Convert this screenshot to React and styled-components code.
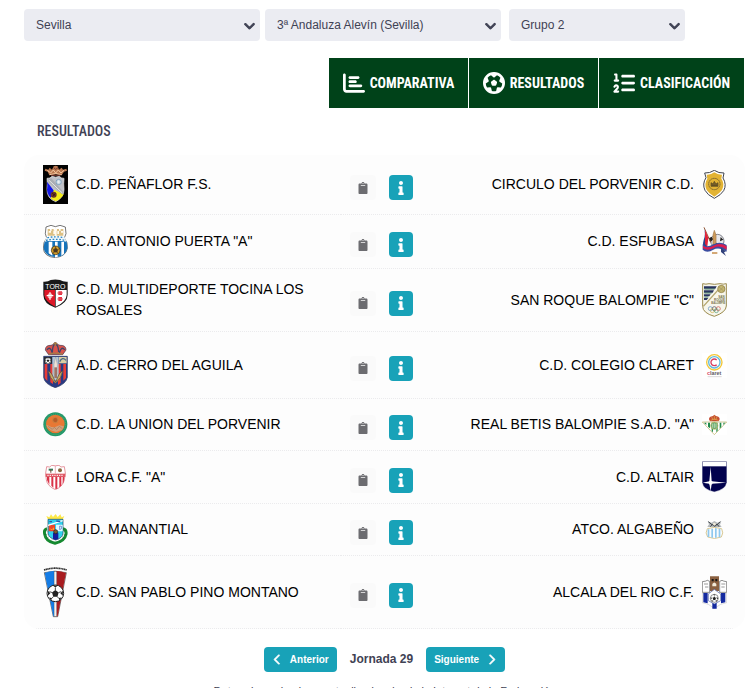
import React, { useState } from 'react'
import styled, { createGlobalStyle } from 'styled-components'
import { FaChartBar, FaFutbol, FaListOl, FaChevronLeft, FaChevronRight, FaChevronDown } from 'react-icons/fa6'
import { FaClipboard, FaInfo } from 'react-icons/fa'

const GlobalStyle = createGlobalStyle`
  * {
    box-sizing: border-box;
  }
  body {
    margin: 0;
    background: #fff;
    color: #3f4254;
    font-family: "Liberation Sans", Arial, sans-serif;
    font-size: 12px;
  }
`

const Page = styled.main`
  padding: 9px 5px 0 24px;
`

const Filters = styled.form`
  display: flex;
  gap: 8px;
  padding-right: 60px;
`

const FilterGroup = styled.div`
  display: flex;
  flex: ${(props) => props.$grow} 1 0;
  gap: 5px;
`

const SelectBox = styled.label`
  position: relative;
  flex: 1 1 0;
  min-width: 0;

  svg {
    position: absolute;
    right: 5px;
    top: 11px;
    stroke: currentColor;
    stroke-width: 50;
    pointer-events: none;
  }
`

const Select = styled.select`
  appearance: none;
  display: block;
  width: 100%;
  height: 32px;
  padding: 0 24px 0 12px;
  border: 0;
  border-radius: 4px;
  background: #ebecf2;
  color: #3f4254;
  font: inherit;
`

const Tabs = styled.nav`
  display: flex;
  justify-content: flex-end;
  margin-top: 17px;
`

const Tab = styled.button`
  display: flex;
  align-items: center;
  justify-content: center;
  gap: 5px;
  width: ${(props) => props.$width};
  height: 50px;
  padding: 0;
  border: 0;
  border-right: 1px solid #fff;
  background: #004219;
  color: #fff;
  font: bold 14px "Roboto Condensed", "Liberation Sans Narrow", "Open Sans Condensed", "Liberation Sans", sans-serif;
  text-transform: uppercase;
  cursor: pointer;

  svg {
    flex: none;
  }
`

const Title = styled.h1`
  margin: 10px 0 0 13px;
  font: 500 14px/26px "Roboto Condensed", "Liberation Sans Narrow", "Open Sans Condensed", "Liberation Sans", sans-serif;
  text-transform: uppercase;
`

const Matches = styled.table`
  width: 100%;
  margin-top: 11px;
  table-layout: fixed;
  border-collapse: separate;
  border-spacing: 0;
  border-radius: 15px;
  background: #fdfdfd;
  overflow: hidden;
  color: #000;
  font-size: 14px;
  line-height: 21px;
`

const Cell = styled.td`
  width: ${(props) => props.$width || 'auto'};
  padding: ${(props) => props.$pad || '10px 18px 10px 19px'};
  border-bottom: 1px dotted #ebebed;
  vertical-align: middle;
`

const Team = styled.div`
  display: flex;
  align-items: ${(props) => (props.$top ? 'flex-start' : 'center')};
  flex-direction: ${(props) => (props.$away ? 'row-reverse' : 'row')};
  gap: 8px;

  svg {
    display: block;
    flex: none;
  }
`

const Actions = styled.div`
  display: flex;
  gap: 13px;
  padding-top: 6px;
`

const IconButton = styled.button`
  display: flex;
  align-items: center;
  justify-content: center;
  width: ${(props) => (props.$info ? '24px' : '26px')};
  height: 25px;
  padding: 0;
  border: 0;
  border-radius: 4px;
  background: ${(props) => (props.$info ? '#18a2b8' : '#fafafa')};
  color: ${(props) => (props.$info ? '#fff' : '#6c6c70')};
  cursor: pointer;
`

const Pager = styled.div`
  display: flex;
  align-items: center;
  justify-content: center;
  gap: 13px;
  margin-top: 18px;
`

const PageButton = styled.button`
  display: flex;
  align-items: center;
  gap: 7px;
  height: 25px;
  padding: 0 8px;
  border: 0;
  border-radius: 4px;
  background: #18a2b8;
  color: #fff;
  font: bold 10px "Liberation Sans", Arial, sans-serif;
  cursor: pointer;

  svg {
    stroke: currentColor;
    stroke-width: 30;
  }
`

const Round = styled.strong`
  font-size: 12px;
  line-height: 21px;
`

const Note = styled.p`
  margin: 12px 0 0;
  font-size: 11px;
  line-height: 14px;
  text-align: center;
`

// every crest is drawn on a grid of 75 units, three to a pixel
const Crest = ({ h, children }) => (
  <svg width="25" height={h} viewBox={`0 0 75 ${h * 3}`} aria-hidden="true">{children}</svg>
)

const Ball = ({ x, y, r, fill = '#fff' }) => (
  <g transform={`translate(${x} ${y}) scale(${r / 10})`}>
    <circle r="10" fill={fill} stroke="#222" strokeWidth="1.2" />
    <path d="M0-4 4-1 2.500 4h-5L-4-1zM-3-9.500h6L0-7zM9-3l0 6-3-3zM-9-3v6l3-3zM5 8.500 4 5.500 7.500 5zM-5 8.500-4 5.500-7.500 5z" fill="#222" />
    <path d="M0-4v-3M4-1l3-1M2.500 4 4 6M-2.500 4-4 6M-4-1l-3-1" stroke="#222" strokeWidth="1" />
  </g>
)

const Penaflor = () => (
  <Crest h={39}>
    <path fill="#020202" d="M0 0h75v117H0z" />
    <path d="M19 31 14 20 5 17l2-6 9 3 4-6 7 6 5-10 6-2 6 2 4 10 8-6 4 6 10-3 2 6-9 3-7 11-16-3z" fill="#b97850" />
    <path d="M20 29q18-7 36 0M13 16l10 8 8-9 7 9 8-9 8 9 9-8" stroke="#f4c8a0" strokeWidth="3" fill="none" />
    <path d="m32 8 6 5 7-5M24 31h29" stroke="#76372e" strokeWidth="3" fill="none" />
    <path d="M12 40q10 1 15-6 11 5 22 0 6 7 14 6-2 16 0 33 0 25-25 37-27-10-26-37 2-17 0-33" fill="#bfc1c8" stroke="#f0f0f0" strokeWidth="2" />
    <path d="M12 50q2 12 0 25 1 22 26 34V84z" fill="#1316e8" />
    <path d="m33 74 29 14q-7 14-24 21-9-3-15-9z" fill="#f4ed18" />
    <path d="m17 42 8-2 37 42-3 7-42-38z" fill="#a9adb3" />
    <path d="m18 46 40 38" stroke="#e7e7e9" strokeWidth="3" />
    <circle cx="47" cy="51" r="8" fill="#c8d5df" stroke="#6894b7" strokeWidth="2" />
    <path d="M42 51h10M47 46v9" stroke="#f8faff" strokeWidth="2" />
    <circle cx="32" cy="89" r="9" fill="#6d3525" />
    <path d="m27 84 10 8M37 85l-8 9" stroke="#1b1012" strokeWidth="2" />
  </Crest>
)

const Puerta = () => (
  <Crest h={33}>
    <path d="M9 6 24 1l13 4 14-4 16 5 2 20-5 13q11 13 9 31-4 24-36 28Q3 95 1 70q-1-18 10-31L7 26z" fill="#fff" stroke="#333" strokeWidth="2" />
    <path d="M14 12h7v5h5v-5h6v5h10v-5h6v5h5v-5h8v20H14z" fill="#dcc084" />
    <path d="M17 18h7v5h-7zm14 0h5v9h-5zm12 0h5v9h-5zm11 0h6v5h-6zM35 10h6v24h-6z" fill="#fffaf0" />
    <path d="M6 48h64q4 11 3 22-6 25-35 26Q6 94 2 70q0-12 4-22" fill="#1673ba" />
    <path d="M17 50h11v42l-11-7zm19 0h8v47h-8zm19 0h8v36l-8 6z" fill="#fff" />
    <path d="M10 37q28-7 55 0l5 13q-32-8-65 0z" fill="#eef6fb" />
    <path d="M13 38q26-5 50 0M9 46q28-6 57 0" stroke="#2684c0" strokeWidth="4" strokeDasharray="5 5" fill="none" />
    <circle cx="38" cy="76" r="13" fill="#d39e27" stroke="#332d20" strokeWidth="2" />
    <path d="m32 74 6-5 6 5-2 7h-9zm-6-5 6 5m12 0 7-5m-9 12 4 6m-13-6-5 6m10-18v-6" fill="#4a3820" stroke="#4a3820" strokeWidth="2" />
  </Crest>
)

const Toro = () => (
  <Crest h={29}>
    <path d="M1 8q14 1 22-5 14-3 28 0 10 6 23 5v39q0 25-37 39Q1 74 1 47z" fill="#181818" />
    <path d="M4 33h32v50Q6 68 4 49z" fill="#dc1828" />
    <path d="M38 33h33v15q-1 21-33 35z" fill="#fff" />
    <text x="37" y="29" textAnchor="middle" fill="#fff" fontSize="21" fontFamily="Liberation Sans">TORO</text>
    <path d="M21 40v22M11 50h20" stroke="#fff" strokeWidth="4" />
    <path d="M16 45h10v11H16z" fill="none" stroke="#fff" strokeWidth="2" />
    <path d="M46 37h11v11H46zm0 17h11v12H46z" fill="#e72f41" />
    <path d="M43 42h17M43 60h17" stroke="#df5863" strokeWidth="3" />
  </Crest>
)

const Aguila = () => (
  <Crest h={46}>
    <path d="M17 38 7 24q0-15 17-14l8-3 2-5h6l3 5 8 3q18-1 18 14L59 38z" fill="#d9534b" stroke="#40364e" strokeWidth="2" />
    <path d="M12 24q9-14 16 9M65 24q-9-14-16 9M28 30q1-23 9-23 9 0 10 23" fill="none" stroke="#3d456b" strokeWidth="4" />
    <path d="M37 0v13M31 5h12M18 36q19-5 40 0" stroke="#a57c45" strokeWidth="4" fill="none" />
    <path d="M2 43h71v63q-3 20-36 31Q4 126 2 106z" fill="#293a84" stroke="#27335d" strokeWidth="2" />
    <path d="M5 66h8v51l-8-9zm17 0h8v60l-8-5zm23 0h8v57l-8 6zm16 0h8v42l-8 8z" fill="#e93c35" />
    <path d="M3 45h24v20H3z" fill="#292d34" />
    <Ball x={15} y={56} r={9} />
    <path d="M48 45h23v19H48z" fill="#d8cda2" />
    <path d="M50 59q8-16 19-4" stroke="#466986" strokeWidth="4" fill="none" />
    <path d="M28 45h19v63q-10 16-19 0z" fill="#b4c6d4" />
    <path d="m38 45 5 22v29q-5 8-10 0V67z" fill="#eee3d9" stroke="#80868b" />
    <path d="M16 86q10 4 20 32h3q10-28 20-32-2 22-22 38-18-16-21-38" fill="#c8a661" stroke="#53493a" strokeWidth="2" />
    <path d="M34 76h8v32h-8z" fill="#9c7568" />
  </Crest>
)

const Union = () => (
  <Crest h={25}>
    <circle cx="37" cy="37" r="36" fill="#219769" />
    <circle cx="37" cy="37" r="31" fill="none" stroke="#4da676" strokeWidth="3" strokeDasharray="3 3" />
    <circle cx="37" cy="36" r="28" fill="#e87834" />
    <circle cx="37" cy="24" r="8" fill="#b65c29" stroke="#c9823f" strokeWidth="3" />
    <path d="m10 38 15 7 10 1 14-6 14 3-6 11-18 6-16-5-10-9z" fill="#d3a07a" />
    <path d="m15 43 13 9 6-6 7 7 8-10 9 7" stroke="#9c7c62" strokeWidth="2" fill="none" />
  </Crest>
)

const Lora = () => (
  <Crest h={25}>
    <path d="M11 5 20 6l6-5q11 3 22 0l6 5 10-1 3 19-3 21q-5 20-27 29Q13 63 10 45L8 24z" fill="#fff" stroke="#d96371" strokeWidth="2" />
    <path d="M12 36h7v23l-7-14zm13 0h6v32l-6-6zm12 0h6v35l-6 1zm12 0h6v26l-6 5zm10 0h5l-2 15-3 6z" fill="#da3247" />
    <path d="M8 26h59v10H8z" fill="#df5865" />
    <path d="M13 31h49" stroke="#fff" strokeWidth="3" strokeDasharray="4 3" />
    <path d="M17 11h13v6H17z" fill="#397454" />
    <path d="M22 15h3v8h-3z" fill="#62462e" />
    <circle cx="51" cy="16" r="6" fill="#8a683e" />
    <path d="M37 3v23" stroke="#d9929a" strokeWidth="2" />
  </Crest>
)

const Manantial = () => (
  <Crest h={31}>
    <path d="m14 15-4-9 9 4 5-9 6 8 8-9 6 9 8-8 4 9 8-4-4 9z" fill="#fce84a" />
    <path d="M12 44Q2 46 5 60q3 22 31 28 29-6 33-27 2-15-9-17" fill="none" stroke="#168a30" strokeWidth="9" />
    <path d="m5 48 9 5M3 61l10 1M9 74l9-6M23 86l4-9M70 48l-9 5M72 61l-10 1M66 74l-9-6M51 86l-4-9" stroke="#07542d" strokeWidth="1" />
    <path d="M15 16h45v42q-1 14-22 20-21-6-23-20z" fill="#2fd2ee" stroke="#203d57" strokeWidth="2" />
    <path d="M17 32h19v20H17z" fill="#ec4629" />
    <path d="M39 32h20v20H39z" fill="#dffaff" />
    <path d="M30 56h16v19l-8 3-8-3z" fill="#151c9c" />
    <path d="m18 43 9 6 4-9 4 9" fill="#ffb52b" />
    <path d="m15 34 44-14" stroke="#fff" strokeWidth="4" />
    <path d="M19 23h8M40 21l12 2" stroke="#3456a8" strokeWidth="4" />
    <path d="M50 36v11q8-1 6-10z" fill="none" stroke="#4b65c0" strokeWidth="2" />
    <circle cx="38" cy="53" r="6" fill="#795a31" stroke="#191e27" strokeWidth="2" />
  </Crest>
)

const SanPablo = () => (
  <Crest h={52}>
    <path d="M3 12Q37 1 72 12" fill="none" stroke="#333" strokeWidth="5" strokeDasharray="4 1" />
    <path d="M4 20q31-9 66 0L44 152H31z" fill="#fff" stroke="#333" strokeWidth="2" />
    <path d="M5 21q14-6 28-6v136h-2z" fill="#147ce5" />
    <path d="M41 15q14 0 28 6L44 151h-3z" fill="#a81c20" />
    <path d="M34 15v136M40 15v136" stroke="#222" />
    <Ball x={37} y={82} r={25} />
  </Crest>
)

const Circulo = () => (
  <Crest h={29}>
    <path d="M8 9Q23 10 37 1q13 9 29 8l-3 15q12 20 2 38-8 13-28 23Q16 75 9 61 0 42 12 23z" fill="#fff" stroke="#40444e" strokeWidth="3" />
    <path d="M14 14q12 1 23-7 11 8 23 7l-2 12q11 14 2 34-7 10-23 20Q20 70 14 60 5 42 16 26z" fill="#e2b334" />
    <circle cx="37" cy="42" r="17" fill="none" stroke="#7d6630" strokeWidth="3" strokeDasharray="5 1" />
    <path d="M27 49v-11l6 4 4-8 5 8 6-4v11zM30 46h15" fill="#79602a" stroke="#55451f" strokeWidth="2" />
  </Crest>
)

const Esfubasa = () => (
  <Crest h={30}>
    <circle cx="46" cy="42" r="20" fill="#e8e8eb" stroke="#4c4f5c" strokeWidth="2" />
    <path d="m20 34 9-5 5 8-9 9zM56 30l8 8-10 5zM40 46l8 4-5 6z" fill="#222" />
    <path d="M33 56V24l4-14 5 14v32z" fill="#cd9c5a" stroke="#a67a48" strokeWidth="2" />
    <path d="M6 1 26 46" stroke="#965835" strokeWidth="3" />
    <path d="M6 3q6 20-1 36-3 10-2 20l12 7-1-38z" fill="#28458a" />
    <path d="m9 8 10 24-3 27-7-8z" fill="#df233b" />
    <path d="M2 52q12 12 32 0 19-10 40 2v20Q50 58 34 68 15 80 2 68z" fill="#3b4da0" />
    <path d="M3 56q14 9 31 0 21-11 40 2v10Q52 52 35 63 17 73 3 64z" fill="#d91d50" />
    <path d="m57 62 15 11-6 3 6 11-15-12z" fill="#32427b" />
    <path d="M30 75h16v6H30z" fill="#d4a977" />
  </Crest>
)

const SanRoque = () => (
  <Crest h={34}>
    <path d="M2 2q10 3 19 0 17 4 33 0 10 3 19 0v67q-1 19-36 31Q2 90 2 70z" fill="#f7f6ec" stroke="#9a8a4d" strokeWidth="3" />
    <path d="M6 10h38l-4 7H6zm0 12h30l-4 7H6zm0 12h20l-4 6H6zm0 11h13l-5 6H6z" fill="#29345f" />
    <path d="M7 18h31M7 30h22M7 42h12" stroke="#3e7460" strokeWidth="3" />
    <path d="M4 70 60 8" stroke="#b3a56c" strokeWidth="4" />
    <circle cx="58" cy="18" r="11" fill="#c4b773" stroke="#8a773d" strokeWidth="2" />
    <path d="m51 12 14 12m0-13L51 25" stroke="#a0915a" strokeWidth="2" />
    <text x="68" y="46" textAnchor="end" fontSize="9" fontWeight="bold" fill="#767148" fontFamily="Liberation Sans">SAN</text>
    <text x="69" y="55" textAnchor="end" fontSize="9" fontWeight="bold" fill="#767148" fontFamily="Liberation Sans">ROQUE</text>
    <text x="70" y="64" textAnchor="end" fontSize="8" fontWeight="bold" fill="#767148" fontFamily="Liberation Sans">BALOMPIE</text>
    <g fill="none" strokeWidth="2">
      <circle cx="25" cy="77" r="6" stroke="#5589bb" />
      <circle cx="37" cy="77" r="6" stroke="#44464f" />
      <circle cx="49" cy="77" r="6" stroke="#cb5148" />
      <circle cx="31" cy="83" r="6" stroke="#cdae4a" />
      <circle cx="43" cy="83" r="6" stroke="#4b9878" />
    </g>
  </Crest>
)

const Claret = () => (
  <Crest h={25}>
    <path fill="#fff" d="M0 0h75v75H0z" />
    <circle cx="37" cy="28" r="23" fill="none" stroke="#f4c735" strokeWidth="4" />
    <circle cx="37" cy="28" r="17" fill="none" stroke="#61b9dc" strokeWidth="4" />
    <path d="M44 21a10 10 0 1 0 0 14" stroke="#d73d5e" strokeWidth="4" fill="none" />
    <text x="15" y="66" fontSize="16" fontWeight="bold" fill="#5d5962" fontFamily="Liberation Sans"><tspan fill="#d84361">c</tspan>laret</text>
    <path d="M17 71h42" stroke="#c7c5c6" strokeWidth="2" />
  </Crest>
)

const Betis = () => (
  <Crest h={21}>
    <path fill="#fff" d="M0 0h75v63H0z" />
    <path d="M25 22q-8-8 0-14l8-2 4-4 5 4 7 2q8 6 0 14z" fill="#c54c32" />
    <path d="M26 19q11-8 23 0M29 9l4 9m4-13v13m8-10-4 10" stroke="#e3b04b" strokeWidth="2" fill="none" />
    <path d="M1 24h73L37 62z" fill="#fff" stroke="#b9ad61" strokeWidth="2" />
    <path d="M7 26h6v7l-6-5zm11 0h6v17l-6-5zm11 0h4v29l-4-4zm14 0h4v24l-4 5zm10 0h5v13l-5 5zm11 0h6l-6 7z" fill="#238b4b" />
    <circle cx="37" cy="35" r="11" fill="#60a773" stroke="#d2bd68" strokeWidth="2" />
    <path d="M32 29v12M37 28v14M42 29v12" stroke="#e5efc7" strokeWidth="2" />
  </Crest>
)

const Altair = () => (
  <Crest h={32}>
    <path d="M1 2h73v62q-4 23-37 28Q4 87 1 64z" fill="#02024e" stroke="#5c5e90" strokeWidth="1" />
    <path d="M2 3h71v13H2z" fill="#fff" />
    <path d="m26 17 3 44 44 4-44 3-3 23-4-23-20-3 20-4z" fill="#fff" />
    <circle cx="26" cy="65" r="6" fill="#fff" />
  </Crest>
)

const Algabeno = () => (
  <Crest h={21}>
    <path d="m17 7 12 4 8-5 9 5 12-4-4 10 5 7H16l5-8z" fill="#b4b8ba" />
    <path d="m19 8 12 10M55 8 44 18M25 23l7-8 6 8 7-8 6 8" stroke="#41464b" strokeWidth="3" fill="none" />
    <circle cx="37" cy="15" r="4" fill="#f2ecd9" />
    <path d="M16 29q21-8 43 0 7 13-1 25-20 9-41 0-9-12-1-25" fill="#f8fbfd" stroke="#dac996" strokeWidth="3" />
    <path d="M17 31h5v23h-5zm11-2h5v27h-5zm11-1h5v28h-5zm11 1h5v26h-5z" fill="#8fc8ee" />
  </Crest>
)

const Alcala = () => (
  <Crest h={33}>
    <path d="M24 1h27v44H24z" fill="#8a6040" />
    <path d="M29 9h6v7h-6zm11 0h6v7h-6z" fill="#171615" />
    <path d="M31 24q6-9 12 0v7H31z" fill="#f1e9d8" />
    <path d="M1 17q11-1 15-4l7 3v33H1zm52-1 7-3q4 3 14 4v32H53z" fill="#fff" stroke="#555" strokeWidth="2" />
    <path d="M6 24h12M9 33h10M58 24h12M58 33h10" stroke="#9a9a9a" strokeWidth="3" />
    <path d="M1 51h73v29l-18 5-19 12-18-12-18-5z" fill="#fff" stroke="#999" />
    <path d="M4 51h13v31L4 79zm53 0h13v28l-13 3zM31 76h13v22H31z" fill="#142aa0" />
    <path d="m19 54 18-14 19 14v20L37 84 19 74z" fill="#fff" stroke="#475ba5" strokeWidth="2" />
    <Ball x={37} y={67} r={12} />
  </Crest>
)

const matches = [
  { home: 'C.D. PEÑAFLOR F.S.', HomeCrest: Penaflor, away: 'CIRCULO DEL PORVENIR C.D.', AwayCrest: Circulo },
  { home: 'C.D. ANTONIO PUERTA "A"', HomeCrest: Puerta, away: 'C.D. ESFUBASA', AwayCrest: Esfubasa },
  { home: 'C.D. MULTIDEPORTE TOCINA LOS ROSALES', HomeCrest: Toro, away: 'SAN ROQUE BALOMPIE "C"', AwayCrest: SanRoque, top: true },
  { home: 'A.D. CERRO DEL AGUILA', HomeCrest: Aguila, away: 'C.D. COLEGIO CLARET', AwayCrest: Claret },
  { home: 'C.D. LA UNION DEL PORVENIR', HomeCrest: Union, away: 'REAL BETIS BALOMPIE S.A.D. "A"', AwayCrest: Betis },
  { home: 'LORA C.F. "A"', HomeCrest: Lora, away: 'C.D. ALTAIR', AwayCrest: Altair },
  { home: 'U.D. MANANTIAL', HomeCrest: Manantial, away: 'ATCO. ALGABEÑO', AwayCrest: Algabeno },
  { home: 'C.D. SAN PABLO PINO MONTANO', HomeCrest: SanPablo, away: 'ALCALA DEL RIO C.F.', AwayCrest: Alcala },
]

const Filter = ({ label, options }) => {
  const [value, setValue] = useState(options[0])
  return (
    <SelectBox>
      <Select aria-label={label} value={value} onChange={(e) => setValue(e.target.value)}>
        {options.map((option) => <option key={option}>{option}</option>)}
      </Select>
      <FaChevronDown size={11} />
    </SelectBox>
  )
}

const App = () => {
  return (
    <Page>
      <GlobalStyle />
      <Filters>
        <FilterGroup $grow={477}>
          <Filter label="Provincia" options={['Sevilla']} />
          <Filter label="Competición" options={['3ª Andaluza Alevín (Sevilla)']} />
        </FilterGroup>
        <FilterGroup $grow={176}>
          <Filter label="Grupo" options={['Grupo 2']} />
        </FilterGroup>
      </Filters>
      <Tabs>
        <Tab type="button" $width="140px"><FaChartBar size={22} />Comparativa</Tab>
        <Tab type="button" $width="130px"><FaFutbol size={22} />Resultados</Tab>
        <Tab type="button" $width="146px"><FaListOl size={22} />Clasificación</Tab>
      </Tabs>
      <Title>Resultados</Title>
      <Matches>
        <tbody>
          {matches.map(({ home, HomeCrest, away, AwayCrest, top }) => (
            <tr key={home}>
              <Cell $width="44%">
                <Team $top={top}><HomeCrest /><span>{home}</span></Team>
              </Cell>
              <Cell $width="91px" $pad="10px 0 10px 9px">
                <Actions>
                  <IconButton type="button" aria-label="Acta"><FaClipboard size={12} /></IconButton>
                  <IconButton type="button" aria-label="Información" $info><FaInfo size={14} /></IconButton>
                </Actions>
              </Cell>
              <Cell>
                <Team $away><AwayCrest /><span>{away}</span></Team>
              </Cell>
            </tr>
          ))}
        </tbody>
      </Matches>
      <Pager>
        <PageButton type="button"><FaChevronLeft size={11} />Anterior</PageButton>
        <Round>Jornada 29</Round>
        <PageButton type="button">Siguiente<FaChevronRight size={11} /></PageButton>
      </Pager>
      <Note>Datos sincronizados y actualizados desde la Intranet de la Federación</Note>
    </Page>
  )
}

export default App
